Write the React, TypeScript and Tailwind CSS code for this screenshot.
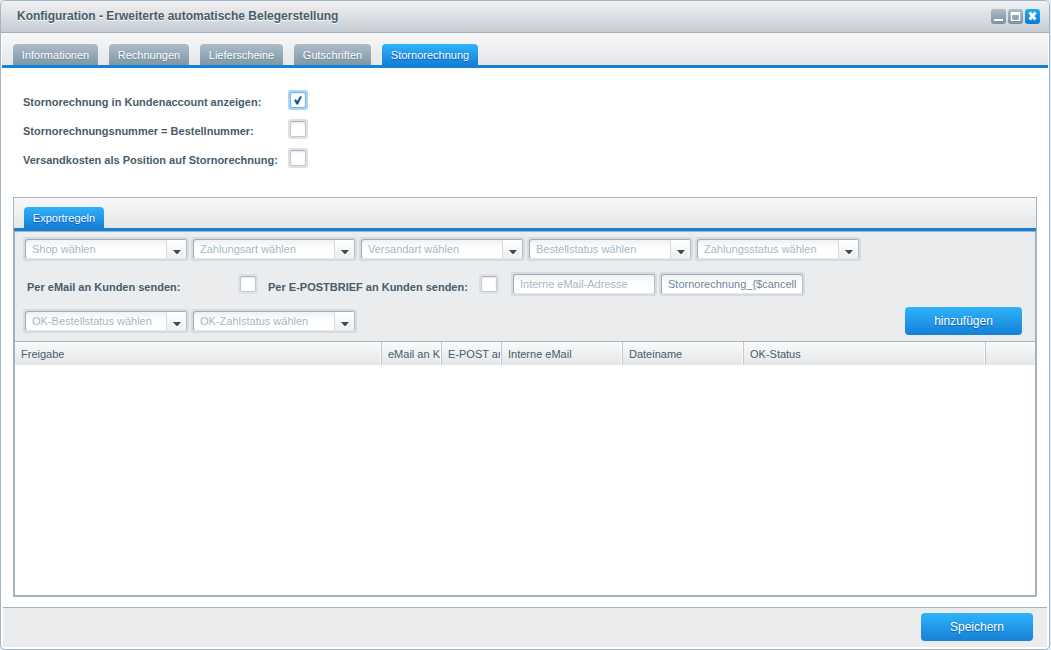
import { useState } from 'react';
import type { InputHTMLAttributes, ReactNode } from 'react';

const tabs = [
  { title: 'Informationen', width: 'w-[85px]' },
  { title: 'Rechnungen', width: 'w-20' },
  { title: 'Lieferscheine', width: 'w-[83px]' },
  { title: 'Gutschriften', width: 'w-[77px]' },
  { title: 'Stornorechnung', width: 'w-24' },
];

const settings = [
  { id: 'show-in-account', label: 'Stornorechnung in Kundenaccount anzeigen:', checked: true },
  { id: 'number-equals-order', label: 'Stornorechnungsnummer = Bestellnummer:', checked: false },
  { id: 'shipping-as-position', label: 'Versandkosten als Position auf Stornorechnung:', checked: false },
];

const filters = ['Shop wählen', 'Zahlungsart wählen', 'Versandart wählen', 'Bestellstatus wählen', 'Zahlungsstatus wählen'];
const okFilters = ['OK-Bestellstatus wählen', 'OK-Zahlstatus wählen'];

const columns = [
  { title: 'Freigabe', width: 'w-[367px]' },
  { title: 'eMail an K', width: 'w-[60px]' },
  { title: 'E-POST an', width: 'w-[60px]' },
  { title: 'Interne eMail', width: 'w-[121px]' },
  { title: 'Dateiname', width: 'w-[121px]' },
  { title: 'OK-Status', width: 'w-[242px]' },
];

interface TabProps {
  active: boolean;
  width: string;
  onClick?: () => void;
  children: ReactNode;
}

function Tab({ active, width, onClick, children }: TabProps) {
  const tone = active
    ? 'bg-linear-to-b from-[#2fb3fa] to-[#1580d6] [text-shadow:0_1px_1px_#0a4fc0]'
    : 'bg-linear-to-b from-[#adbdc8] to-[#7f97a6] [text-shadow:0_1px_1px_#6f8593]';
  return (
    <button
      type="button"
      role="tab"
      aria-selected={active}
      onClick={onClick}
      className={`h-[21px] rounded-t pt-0.5 text-[11px] leading-[19px] whitespace-nowrap text-white ${width} ${tone}`}
    >
      {children}
    </button>
  );
}

function Checkbox(props: InputHTMLAttributes<HTMLInputElement>) {
  return (
    <span className="grid size-5 shrink-0 place-items-center rounded-[3px] bg-[#dde1e5] has-checked:bg-[#a9d6f8]">
      <input
        type="checkbox"
        {...props}
        className="peer col-start-1 row-start-1 m-0 size-4 appearance-none rounded-xs border border-[#c3cad1] border-t-[#a9b4bd] bg-white shadow-[inset_0_1px_2px_#e2e4e6] checked:border-[#6db5ee]"
      />
      <svg
        viewBox="0 0 8 9"
        className="pointer-events-none invisible col-start-1 row-start-1 h-[9px] w-2 peer-checked:visible"
        aria-hidden="true"
      >
        <path d="M0 4 L2 3.2 L3.1 5 L6 0.2 L8 0.6 L4 8.6 L2.4 8.6 Z" fill="#105a96" />
      </svg>
    </span>
  );
}

function Combo({ label }: { label: string }) {
  return (
    <div className="w-[166px] rounded-[3px] bg-[#d5dbe1] p-0.5">
      <div className="grid h-5 grid-cols-[1fr_20px] overflow-hidden rounded-[3px] border border-[#b4bfc8] border-t-[#a0acb6] border-b-[#e4e7ea] border-l-[#a0acb6] bg-linear-to-b from-[#f0f1f1] to-white to-50%">
        <select
          aria-label={label}
          className="col-span-2 col-start-1 row-start-1 min-w-0 appearance-none bg-transparent pl-1.5 text-[11px] leading-[18px] text-[#a5b8c6] outline-none"
        >
          <option>{label}</option>
        </select>
        <span className="pointer-events-none col-start-2 row-start-1 flex items-center justify-center border-l border-[#d3d9df] bg-linear-to-b from-white to-[#eef0f1] pt-1.5">
          <svg viewBox="0 0 8 4" className="h-1 w-2" aria-hidden="true">
            <path d="M0 0 H8 L4.5 4 H3.5 Z" fill="#3c4c57" />
          </svg>
        </span>
      </div>
    </div>
  );
}

function TextField(props: InputHTMLAttributes<HTMLInputElement>) {
  return (
    <div className="w-[146px] rounded-[3px] bg-[#d5dbe1] p-0.5">
      <input
        type="text"
        {...props}
        className="block h-5 w-full rounded-[3px] border border-[#b4bfc8] border-t-[#a0acb6] border-b-[#e4e7ea] border-l-[#a0acb6] bg-linear-to-b from-[#f0f1f1] to-white to-50% px-1.5 text-[11px] leading-[18px] text-[#6d8599] outline-none placeholder:text-[#a5b8c6]"
      />
    </div>
  );
}

function PrimaryButton({ width, children }: { width: string; children: ReactNode }) {
  return (
    <button
      type="button"
      className={`h-7 rounded bg-linear-to-b from-[#2fb3fa] to-[#1580d6] text-xs text-white [text-shadow:0_1px_1px_#0e5ea6] ${width}`}
    >
      {children}
    </button>
  );
}

function WindowButtons() {
  const base = 'flex size-[15px] items-center justify-center rounded-[3px]';
  return (
    <div className="flex gap-0.5">
      <button type="button" aria-label="Minimieren" className={`${base} bg-linear-to-b from-[#aebcc8] to-[#7b909e]`}>
        <svg viewBox="0 0 15 15" className="size-[15px]" aria-hidden="true">
          <rect x="3" y="10" width="9" height="2" fill="#fff" />
        </svg>
      </button>
      <button type="button" aria-label="Maximieren" className={`${base} bg-linear-to-b from-[#aebcc8] to-[#7b909e]`}>
        <svg viewBox="0 0 15 15" className="size-[15px]" aria-hidden="true">
          <path d="M2.8 3 H12.2 V12 H2.8 Z M4.2 6 V10.8 H10.8 V6 Z" fill="#fff" fillRule="evenodd" />
        </svg>
      </button>
      <button type="button" aria-label="Schließen" className={`${base} bg-linear-to-b from-[#22adf5] to-[#0b79d2]`}>
        <svg viewBox="0 0 15 15" className="size-[15px]" aria-hidden="true">
          <path d="M4.6 3.5 L10.4 10.5 M10.4 3.5 L4.6 10.5" stroke="#fff" strokeWidth="2.8" />
        </svg>
      </button>
    </div>
  );
}

export default function App() {
  const [activeTab, setActiveTab] = useState('Stornorechnung');

  return (
    <div className="flex min-h-screen bg-[#dcebf8] pr-px font-['Liberation_Sans',Arial,sans-serif] text-[11px] leading-4 text-[#475c6a]">
      <div className="flex flex-1 flex-col overflow-hidden rounded-[5px] border border-[#a3b5c6] bg-white">
        <header className="flex h-8 items-center justify-between border-b border-[#9eb0bd] bg-linear-to-b from-[#f1f1f2] to-[#c6cdd3] pr-[9px] pl-4">
          <h1 className="pb-0.5 text-xs leading-4 font-bold [text-shadow:0_1px_0_#ffffff]">
            Konfiguration - Erweiterte automatische Belegerstellung
          </h1>
          <WindowButtons />
        </header>

        <div className="flex flex-1 flex-col px-px">
          <div
            role="tablist"
            className="flex h-[35px] items-end gap-[11px] border-b-[3px] border-[#1580d6] bg-linear-to-b from-[#f8f8f8] to-[#e4e6e9] pl-[11px]"
          >
            {tabs.map((tab) => (
              <Tab
                key={tab.title}
                width={tab.width}
                active={tab.title === activeTab}
                onClick={() => setActiveTab(tab.title)}
              >
                {tab.title}
              </Tab>
            ))}
          </div>

          <main className="flex flex-1 flex-col px-[11px] pb-2.5">
            <div className="flex flex-col gap-[9px] pt-[22px] pb-[29px] pl-2.5">
              {settings.map((s) => (
                <div key={s.id} className="flex items-center">
                  <label htmlFor={s.id} className="w-[265px] pt-1 font-bold whitespace-nowrap">
                    {s.label}
                  </label>
                  <Checkbox id={s.id} defaultChecked={s.checked} />
                </div>
              ))}
            </div>

            <section className="flex flex-1 flex-col">
              <div className="border border-b-0 border-[#a3b2be]">
                <div
                  role="tablist"
                  className="flex h-[33px] items-end border-b-[3px] border-[#1580d6] bg-linear-to-b from-[#f8f8f8] to-[#e4e6e9] pl-2.5"
                >
                  <Tab active width="w-20">
                    Exportregeln
                  </Tab>
                </div>
              </div>

              <div className="flex flex-1 flex-col border-2 border-t border-[#a3b2be]">
                <div className="flex flex-col gap-[11px] border-b border-[#a3b2be] bg-[#ebecee] px-2 pt-[5px] pb-1.5">
                  <div className="flex flex-wrap gap-0.5">
                    {filters.map((f) => (
                      <Combo key={f} label={f} />
                    ))}
                  </div>
                  <div className="flex items-center">
                    <label htmlFor="send-mail" className="w-[215px] pt-1.5 pl-1 font-bold">
                      Per eMail an Kunden senden:
                    </label>
                    <Checkbox id="send-mail" />
                    <label htmlFor="send-epost" className="w-[221px] pt-1.5 pl-2.5 font-bold whitespace-nowrap">
                      Per E-POSTBRIEF an Kunden senden:
                    </label>
                    <Checkbox id="send-epost" />
                    <div className="ml-3 flex gap-0.5">
                      <TextField aria-label="Interne eMail-Adresse" placeholder="Interne eMail-Adresse" />
                      <TextField aria-label="Dateiname" defaultValue="Stornorechnung_{$cancellationNumber}" />
                    </div>
                  </div>
                  <div className="flex items-center justify-between pr-[5px]">
                    <div className="flex gap-0.5">
                      {okFilters.map((f) => (
                        <Combo key={f} label={f} />
                      ))}
                    </div>
                    <PrimaryButton width="w-[117px]">hinzufügen</PrimaryButton>
                  </div>
                </div>

                <table className="w-full table-fixed border-separate border-spacing-0">
                  <thead>
                    <tr className="h-[23px] bg-linear-to-b from-[#fafafa] to-[#e4e6e8]">
                      {columns.map((c) => (
                        <th
                          key={c.title}
                          scope="col"
                          className={`border-r border-[#c3c9ce] py-0 pr-px pl-1.5 text-left font-normal whitespace-nowrap shadow-[inset_-1px_0_0_#fafafa] ${c.width}`}
                        >
                          <div className="overflow-hidden">{c.title}</div>
                        </th>
                      ))}
                      <td />
                    </tr>
                  </thead>
                  <tbody />
                </table>
              </div>
            </section>
          </main>

          <footer className="mx-px mb-0.5 flex h-10 items-start justify-end border-t border-[#a3b2be] bg-[#ebecee] pt-[5px] pr-3.5">
            <PrimaryButton width="w-28">Speichern</PrimaryButton>
          </footer>
        </div>
      </div>
    </div>
  );
}
